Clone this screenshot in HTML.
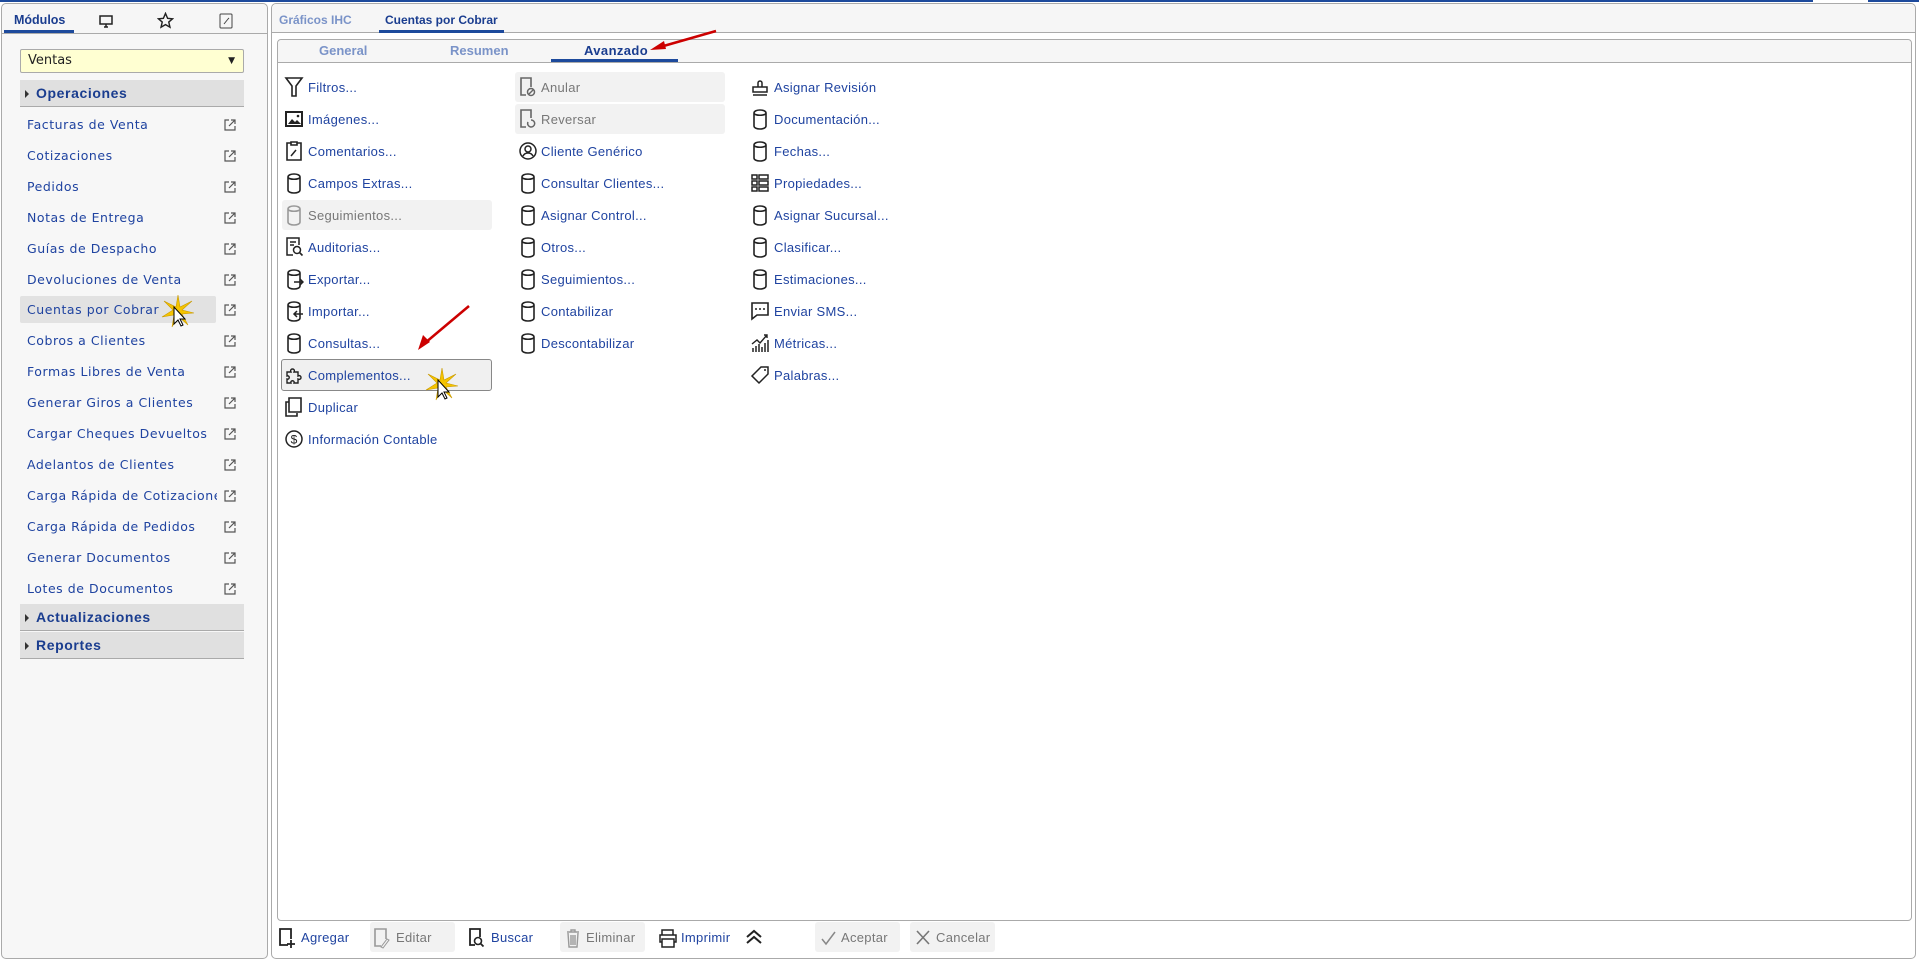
<!DOCTYPE html>
<html><head><meta charset="utf-8"><style>
*{box-sizing:border-box;margin:0;padding:0}
body{width:1919px;height:961px;background:#fff;font-family:"Liberation Sans",sans-serif;font-size:13px;color:#1f43a0;position:relative;overflow:hidden}
.a{position:absolute}
.topline{left:0;top:0;width:1919px;height:2px;background:#1d4a9c}
.lp{left:1px;top:3px;width:267px;height:956px;border:1px solid #aaa;border-radius:5px;background:#f7f7f7}
.rp{left:271px;top:3px;width:1645px;height:956px;border:1px solid #aaa;border-radius:5px;background:#fff}
.tabbar{background:#f6f6f6;border-bottom:1px solid #aaa}
.lt{white-space:nowrap;line-height:16px}
.li{left:27px;font-family:"DejaVu Sans",sans-serif;font-size:12.5px;letter-spacing:.55px}
.ext{left:224px;width:12px;height:12px}
.hdr{left:20px;width:224px;height:27px;background:#e0e0e0;border-bottom:1px solid #aaa;font-weight:bold;font-size:14px;color:#1a3d8f;padding-left:16px;line-height:26px;letter-spacing:.6px}
.hdr:before{content:"";position:absolute;left:5px;top:10px;border-left:4px solid #333;border-top:4px solid transparent;border-bottom:4px solid transparent}
.it{white-space:nowrap;line-height:16px;font-size:13px;letter-spacing:.3px}
.ic{width:20px;height:22px}
.dis{color:#777}
.hl{background:#f2f2f2;border-radius:3px}
</style></head><body>
<div class="a topline"></div>
<div class="a" style="left:1813px;top:0;width:55px;height:3px;background:#fff"></div>
<div class="a lp">
 <div class="a tabbar" style="left:0;top:0;width:265px;height:30px;border-radius:5px 5px 0 0"></div>
</div>
<div class="a lt" style="left:14px;top:12px;font-weight:bold;color:#1a3d8f;font-size:12.5px">Módulos</div>
<div class="a" style="left:4px;top:30px;width:70px;height:3px;background:#1d4a9c"></div>
<svg class="a" style="left:98px;top:13px" width="16" height="16" viewBox="0 0 16 16"><rect x="2" y="3" width="12" height="8" fill="none" stroke="#222" stroke-width="1.5"/><path d="M6 14h4M8 11v3" stroke="#222" stroke-width="1.5"/></svg>
<svg class="a" style="left:157px;top:12px" width="17" height="17" viewBox="0 0 24 24"><path d="M12 2l3 7 7 .6-5.4 4.6 1.7 7.3L12 17.8 5.7 21.5l1.7-7.3L2 9.6 9 9z" fill="none" stroke="#222" stroke-width="2"/></svg>
<svg class="a" style="left:219px;top:13px" width="14" height="16" viewBox="0 0 14 16"><rect x="1" y="1" width="12" height="14" rx="1" fill="none" stroke="#444"/><path d="M5 11l4-5M9 6l1-1" stroke="#444"/></svg>
<div class="a" style="left:20px;top:49px;width:224px;height:24px;background:#ffffd2;border:1px solid #aaa;border-radius:2px;color:#222;font-size:13px;line-height:22px;padding-left:7px;font-family:'DejaVu Sans',sans-serif">Ventas<span style="position:absolute;right:8px;font-size:9px">▼</span></div>
<div class="a hdr" style="top:80px">Operaciones</div>
<div class="a" style="left:20px;top:296px;width:196px;height:27px;background:#e2e2e2;border-radius:2px"></div>
<div id="list"></div>
<div class="a hdr" style="top:604px">Actualizaciones</div>
<div class="a hdr" style="top:632px">Reportes</div>
<div class="a rp"><div class="a tabbar" style="left:0;top:0;width:1643px;height:29px;border-radius:5px 5px 0 0"></div></div>
<div class="a lt" style="left:279px;top:12px;font-weight:bold;color:#7a93c8;font-size:12px">Gráficos IHC</div>
<div class="a lt" style="left:385px;top:12px;font-weight:bold;color:#1a3d8f;font-size:12px">Cuentas por Cobrar</div>
<div class="a" style="left:379px;top:30px;width:125px;height:3px;background:#1d4a9c"></div>
<div class="a" style="left:277px;top:39px;width:1635px;height:882px;border:1px solid #aaa;border-radius:4px;background:#fff">
 <div class="a tabbar" style="left:0;top:0;width:1633px;height:23px;border-radius:4px 4px 0 0"></div>
</div>
<div class="a lt" style="left:319px;top:43px;font-weight:bold;color:#7a93c8">General</div>
<div class="a lt" style="left:450px;top:43px;font-weight:bold;color:#7a93c8">Resumen</div>
<div class="a lt" style="left:584px;top:43px;font-weight:bold;color:#1a3d8f;letter-spacing:.4px">Avanzado</div>
<div class="a" style="left:551px;top:59px;width:127px;height:3px;background:#1d4a9c"></div>
<svg class="a" style="left:640px;top:25px" width="80" height="30"><path d="M716 31L660 47" transform="translate(-640,-25)" stroke="#c00" stroke-width="2.5"/><path d="M650 50l14-9 2 8z" transform="translate(-640,-25)" fill="#c00"/></svg>
<svg class="a" style="left:412px;top:302px" width="60" height="55"><path d="M57 4L13 41" stroke="#c00" stroke-width="2.5"/><path d="M6 48l5-15 7 7z" fill="#c00"/></svg>
<div class="a hl" style="left:515px;top:72px;width:210px;height:30px"></div>
<div class="a hl" style="left:515px;top:104px;width:210px;height:30px"></div>
<div class="a hl" style="left:282px;top:200px;width:210px;height:30px"></div>
<div class="a" style="left:281px;top:359px;width:211px;height:32px;background:#f0f0f0;border:1px solid #888;border-radius:3px"></div>
<div id="items"></div>
<svg class="a" style="left:160px;top:293px" width="36" height="36"><path d="M18 2L20 14 32 8 22 17 34 20 22 21 28 32 18 23 12 34 14 22 2 24 13 17 4 8 16 14z" fill="#f5c400" stroke="#c99a00" stroke-width=".6"/><path d="M14 14l0 17 4-4 3 6 2-1-3-6 5 0z" fill="#fff" stroke="#000"/></svg>
<svg class="a" style="left:424px;top:366px" width="36" height="36"><path d="M18 2L20 14 32 8 22 17 34 20 22 21 28 32 18 23 12 34 14 22 2 24 13 17 4 8 16 14z" fill="#f5c400" stroke="#c99a00" stroke-width=".6"/><path d="M14 14l0 17 4-4 3 6 2-1-3-6 5 0z" fill="#fff" stroke="#000"/></svg>
<div class="a hl" style="left:370px;top:922px;width:85px;height:30px"></div>
<div class="a hl" style="left:560px;top:922px;width:85px;height:30px"></div>
<div class="a hl" style="left:815px;top:922px;width:85px;height:30px"></div>
<div class="a hl" style="left:910px;top:922px;width:85px;height:30px"></div>
<svg class="a" style="left:278px;top:927px" width="18" height="22"><path d="M10 18H2V2h11v10" fill="none" stroke="#222" stroke-width="1.8"/><path d="M13 13v8M9 17h8" stroke="#222" stroke-width="1.8"/></svg>
<div class="a it" style="left:301px;top:930px">Agregar</div>
<svg class="a" style="left:373px;top:927px" width="18" height="22"><path d="M8 19H2V2h11v10" fill="none" stroke="#999" stroke-width="1.6"/><path d="M8 20l6-8 2 1-6 8z" fill="none" stroke="#999"/></svg>
<div class="a it dis" style="left:396px;top:930px">Editar</div>
<svg class="a" style="left:468px;top:927px" width="18" height="22"><path d="M7 18H2V2h10v8" fill="none" stroke="#222" stroke-width="1.8"/><circle cx="10" cy="14" r="3.5" fill="none" stroke="#222" stroke-width="1.6"/><path d="M12.5 16.5l3 3" stroke="#222" stroke-width="1.8"/></svg>
<div class="a it" style="left:491px;top:930px">Buscar</div>
<svg class="a" style="left:565px;top:927px" width="16" height="22"><path d="M2 5h12M6 5V3h4v2M3 6l1 14h8l1-14M6 8v10M8 8v10M10 8v10" fill="none" stroke="#999" stroke-width="1.4"/></svg>
<div class="a it dis" style="left:586px;top:930px">Eliminar</div>
<svg class="a" style="left:658px;top:927px" width="20" height="22"><path d="M4 8V3h11v5M4 15H2V8h16v7h-2M4 12h12v8H4z" fill="none" stroke="#222" stroke-width="1.5"/></svg>
<div class="a it" style="left:681px;top:930px">Imprimir</div>
<svg class="a" style="left:744px;top:928px" width="20" height="18"><path d="M3 9l7-6 7 6M3 15l7-6 7 6" fill="none" stroke="#222" stroke-width="2"/></svg>
<svg class="a" style="left:820px;top:930px" width="16" height="16"><path d="M2 9l4 5 9-12" fill="none" stroke="#888" stroke-width="1.5"/></svg>
<div class="a it dis" style="left:841px;top:930px">Aceptar</div>
<svg class="a" style="left:915px;top:929px" width="16" height="17"><path d="M2 2l12 13M14 2L2 15" stroke="#777" stroke-width="1.6"/></svg>
<div class="a it dis" style="left:936px;top:930px">Cancelar</div>
<script>
var L=["Facturas de Venta","Cotizaciones","Pedidos","Notas de Entrega","Guías de Despacho","Devoluciones de Venta","Cuentas por Cobrar","Cobros a Clientes","Formas Libres de Venta","Generar Giros a Clientes","Cargar Cheques Devueltos","Adelantos de Clientes","Carga Rápida de Cotizaciones","Carga Rápida de Pedidos","Generar Documentos","Lotes de Documentos"];
var h="";
L.forEach(function(t,i){var y=Math.round(125+i*30.9);
h+='<div class="a lt li" style="top:'+(y-8)+'px;width:190px;overflow:hidden">'+t+'</div>';
h+='<svg class="a ext" style="top:'+(y-6)+'px" viewBox="0 0 12 12"><path d="M5 1H1v10h10V7M7 1h4v4M11 1L5 7" fill="none" stroke="#555" stroke-width="1.2"/></svg>';});
document.getElementById("list").innerHTML=h;
var db='<path d="M4 5c0-4 12-4 12 0v13c0 4-12 4-12 0zM4 5c0 3 12 3 12 0" fill="none" stroke="COL" stroke-width="1.6"/>';
var ic={
filt:'<path d="M2 2h16l-6 8v10h-4V10z" fill="none" stroke="#222" stroke-width="1.6"/>',
img:'<rect x="2" y="4" width="16" height="14" fill="none" stroke="#222" stroke-width="2"/><path d="M4 16l4-5 3 3 2-2 4 4z" fill="#222"/><circle cx="14" cy="8" r="1.3" fill="#222"/>',
com:'<path d="M7 3H3v17h14V3h-4M7 2h6v3H7z" fill="none" stroke="#222" stroke-width="1.6"/><path d="M7 16l5-6" stroke="#222" stroke-width="1.5"/>',
db:db.replace("COL","#222"),dbg:db.replace("COL","#999"),
aud:'<path d="M9 19H3V2h12v7M6 6h6M6 9h4" fill="none" stroke="#222" stroke-width="1.5"/><circle cx="13" cy="14" r="3.5" fill="none" stroke="#222" stroke-width="1.5"/><path d="M15.5 16.5l3 3" stroke="#222" stroke-width="1.6"/>',
exp:db.replace("COL","#222")+'<path d="M10 14h9M16 11l3 3-3 3" fill="none" stroke="#222" stroke-width="1.5"/>',
imp:db.replace("COL","#222")+'<path d="M19 14h-9M13 11l-3 3 3 3" fill="none" stroke="#222" stroke-width="1.5"/>',
puz:'<path d="M3 8h4c-2-4 5-4 3 0h4v4c4-2 4 5 0 3v4h-4c1-3-4-3-3 0H3v-4c3 1 3-4 0-3z" fill="none" stroke="#222" stroke-width="1.4"/>',
dup:'<path d="M5 6H2v14h11v-3M5 2h12v14H5z" fill="none" stroke="#222" stroke-width="1.6"/>',
dol:'<circle cx="10" cy="11" r="8" fill="none" stroke="#222" stroke-width="1.5"/><text x="10" y="15.5" font-size="12" text-anchor="middle" fill="#222" font-family="Liberation Sans">$</text>',
anu:'<path d="M8 19H3V2h10v9" fill="none" stroke="#666" stroke-width="1.6"/><circle cx="13" cy="16" r="3.5" fill="none" stroke="#666" stroke-width="1.5"/><path d="M11 18l4-4" stroke="#666" stroke-width="1.4"/>',
rev:'<path d="M8 19H3V2h10v8" fill="none" stroke="#666" stroke-width="1.6"/><path d="M10 14a3.5 3.5 0 1 0 3-2" fill="none" stroke="#666" stroke-width="1.5"/>',
usr:'<circle cx="10" cy="11" r="8" fill="none" stroke="#222" stroke-width="1.5"/><circle cx="10" cy="9" r="3" fill="none" stroke="#222" stroke-width="1.5"/><path d="M5 16c2-4 8-4 10 0" fill="none" stroke="#222" stroke-width="1.5"/>',
stamp:'<path d="M8 11V7a2 2 0 1 1 4 0v4M3 11h14v5H3zM3 19h14" fill="none" stroke="#222" stroke-width="1.5"/>',
prop:'<path d="M2 3h5v4H2zM9 3h9v4H9zM2 9h5v4H2zM9 9h9v4H9zM2 15h5v4H2zM9 15h9v4H9z" fill="none" stroke="#222" stroke-width="1.5"/>',
sms:'<path d="M2 3h16v12H7l-5 4z" fill="none" stroke="#222" stroke-width="1.6"/><circle cx="6" cy="9" r="1" fill="#222"/><circle cx="10" cy="9" r="1" fill="#222"/><circle cx="14" cy="9" r="1" fill="#222"/>',
met:'<path d="M3 20v-4M6 20v-6M9 20v-8M12 20v-5M15 20v-9M18 20v-12" stroke="#222" stroke-width="1.5"/><path d="M2 12l5-4 3 3 7-8M14 3h3v3" fill="none" stroke="#222" stroke-width="1.4"/>',
tag:'<path d="M11 3h7v7l-9 9-7-7z" fill="none" stroke="#222" stroke-width="1.5"/><circle cx="15" cy="6" r="1" fill="#222"/>'
};
var C=[
[284,308,[["filt","Filtros..."],["img","Imágenes..."],["com","Comentarios..."],["db","Campos Extras..."],["dbg","Seguimientos...",1],["aud","Auditorias..."],["exp","Exportar..."],["imp","Importar..."],["db","Consultas..."],["puz","Complementos..."],["dup","Duplicar"],["dol","Información Contable"]]],
[518,541,[["anu","Anular",1],["rev","Reversar",1],["usr","Cliente Genérico"],["db","Consultar Clientes..."],["db","Asignar Control..."],["db","Otros..."],["db","Seguimientos..."],["db","Contabilizar"],["db","Descontabilizar"]]],
[750,774,[["stamp","Asignar Revisión"],["db","Documentación..."],["db","Fechas..."],["prop","Propiedades..."],["db","Asignar Sucursal..."],["db","Clasificar..."],["db","Estimaciones..."],["sms","Enviar SMS..."],["met","Métricas..."],["tag","Palabras..."]]]];
h="";
C.forEach(function(c){c[2].forEach(function(r,i){var y=88+i*32;
h+='<svg class="a ic" style="left:'+c[0]+'px;top:'+(y-12)+'px" viewBox="0 0 20 22">'+ic[r[0]]+'</svg>';
h+='<div class="a it'+(r[2]?' dis':'')+'" style="left:'+c[1]+'px;top:'+(y-8)+'px">'+r[1]+'</div>';});});
document.getElementById("items").innerHTML=h;
</script>
</body></html>
